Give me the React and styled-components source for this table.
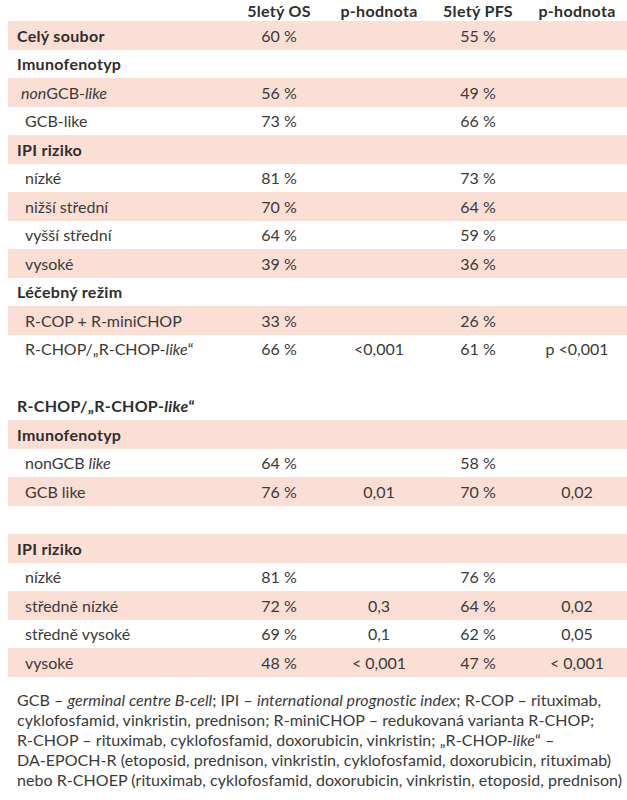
import React from "react";
import styled, { createGlobalStyle } from "styled-components";

const GlobalStyle = createGlobalStyle`
  html, body { margin: 0; padding: 0; background: #ffffff; }
  body {
    font-family: "Lato", "Liberation Sans", sans-serif;
    color: #3a3a3a;
    -webkit-font-smoothing: antialiased;
  }
`;

const Page = styled.div`
  width: 627px;
`;

const Table = styled.div`
  margin-left: 8px;
  width: 619px;
  display: flex;
  flex-direction: column;
`;

const COLS = "221px 100px 100px 98px 1fr";

const HeadRow = styled.div`
  display: grid;
  grid-template-columns: ${COLS};
  height: 21px;
  align-items: center;
  font-weight: 700;
  font-size: 16px;
  letter-spacing: 0.3px;
  color: #2e2e2e;
`;

const Row = styled.div`
  display: grid;
  grid-template-columns: ${COLS};
  height: 28.5px;
  align-items: center;
  background: ${(p) => (p.$shade ? "#fcdfd4" : "transparent")};
  font-size: 16px;
`;

const Label = styled.div`
  padding-left: ${(p) => (p.$indent ? `${p.$indent}px` : "9px")};
  font-weight: ${(p) => (p.$bold ? 700 : 400)};
  letter-spacing: ${(p) => (p.$bold ? "0.3px" : "0")};
  color: ${(p) => (p.$bold ? "#2e2e2e" : "inherit")};
  white-space: nowrap;
`;

const Cell = styled.div`
  text-align: center;
  white-space: nowrap;
`;

const Footer = styled.div`
  margin-top: 13px;
  padding-left: 17px;
  font-size: 16px;
  line-height: 20px;
  letter-spacing: 0.05px;
  white-space: nowrap;
`;

const header = ["5letý OS", "p-hodnota", "5letý PFS", "p-hodnota"];

const rows = [
  { label: "Celý soubor", bold: true, v: ["60 %", "", "55 %", ""] },
  { label: "Imunofenotyp", bold: true },
  { label: <><i>non</i>GCB-<i>like</i></>, indent: 13, v: ["56 %", "", "49 %", ""] },
  { label: "GCB-like", indent: 17, v: ["73 %", "", "66 %", ""] },
  { label: "IPI riziko", bold: true },
  { label: "nízké", indent: 17, v: ["81 %", "", "73 %", ""] },
  { label: "nižší střední", indent: 17, v: ["70 %", "", "64 %", ""] },
  { label: "vyšší střední", indent: 17, v: ["64 %", "", "59 %", ""] },
  { label: "vysoké", indent: 17, v: ["39 %", "", "36 %", ""] },
  { label: "Léčebný režim", bold: true },
  { label: "R-COP + R-miniCHOP", indent: 17, v: ["33 %", "", "26 %", ""] },
  { label: <>R-CHOP/„R-CHOP-<i>like</i>“</>, indent: 17, v: ["66 %", "<0,001", "61 %", "p <0,001"] },
  { blank: true },
  { label: <>R-CHOP/„R-CHOP-<i>like</i>“</>, bold: true, plain: true },
  { label: "Imunofenotyp", bold: true },
  { label: <>nonGCB <i>like</i></>, indent: 17, v: ["64 %", "", "58 %", ""] },
  { label: "GCB like", indent: 17, v: ["76 %", "0,01", "70 %", "0,02"] },
  { blank: true },
  { label: "IPI riziko", bold: true },
  { label: "nízké", indent: 17, v: ["81 %", "", "76 %", ""] },
  { label: "středně nízké", indent: 17, v: ["72 %", "0,3", "64 %", "0,02"] },
  { label: "středně vysoké", indent: 17, v: ["69 %", "0,1", "62 %", "0,05"] },
  { label: "vysoké", indent: 17, v: ["48 %", "< 0,001", "47 %", "< 0,001"] },
];

const footerLines = [
  <>GCB – <i>germinal centre B-cell</i>; IPI – <i>international prognostic index</i>; R-COP – rituximab,</>,
  <>cyklofosfamid, vinkristin, prednison; R-miniCHOP – redukovaná varianta R-CHOP;</>,
  <>R-CHOP – rituximab, cyklofosfamid, doxorubicin, vinkristin; „R-CHOP-<i>like</i>“ –</>,
  <>DA-EPOCH-R (etoposid, prednison, vinkristin, cyklofosfamid, doxorubicin, rituximab)</>,
  <>nebo R-CHOEP (rituximab, cyklofosfamid, doxorubicin, vinkristin, etoposid, prednison)</>,
];

export default function App() {
  return (
    <Page>
      <GlobalStyle />
      <Table>
        <HeadRow>
          <div />
          {header.map((h, i) => (
            <Cell key={i}>{h}</Cell>
          ))}
        </HeadRow>
        {rows.map((r, i) => {
          const shade = !r.blank && !r.plain && i % 2 === 0;
          return (
            <Row key={i} $shade={shade}>
              <Label $bold={r.bold} $indent={r.indent}>{r.label}</Label>
              {(r.v || ["", "", "", ""]).map((c, j) => (
                <Cell key={j}>{c}</Cell>
              ))}
            </Row>
          );
        })}
      </Table>
      <Footer>
        {footerLines.map((l, i) => (
          <div key={i}>{l}</div>
        ))}
      </Footer>
    </Page>
  );
}
